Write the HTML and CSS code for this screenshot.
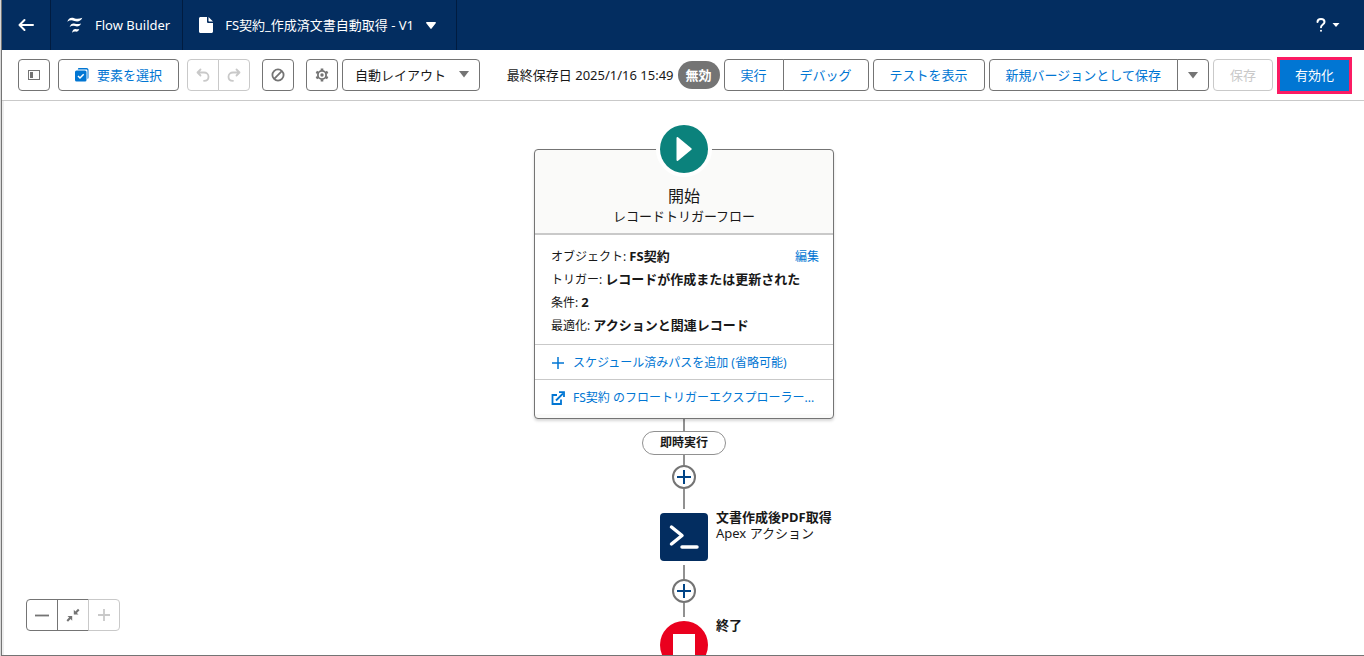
FILE: index.html
```html
<!DOCTYPE html>
<html lang="ja">
<head>
    <meta charset="UTF-8">
    <meta name="viewport" content="width=device-width, initial-scale=1.0">
    <title>FS契約_作成済文書自動取得 - V1 | Flow Builder</title>
    <link rel="stylesheet" href="styles.css">
</head>
<body>
<div class="app">
    <header class="header">
        <button class="header-item back" aria-label="戻る">
            <svg width="16" height="14" viewBox="0 0 16 14" fill="none" stroke="#fff" stroke-width="2" stroke-linecap="round" stroke-linejoin="round"><path d="M6.500 2l-5 5 5 5M1.500 7H15"/></svg>
        </button>
        <div class="header-item brand">
            <svg width="16" height="16" viewBox="0 0 16 16" fill="#fff"><path d="M.3 4.800C1.500 1 4 .2 7.200 1.200c2.600.8 5 .8 8.100-.5-1.500 3.600-4.600 4.300-8 3.200C4.600 3 2.600 3.200.3 4.800z"/><path d="M2.600 10c1.100-3.400 3.200-4 5.400-3.300 1.900.6 3.700.6 6-.3-1.200 3-3.500 3.500-6 2.700-2-.6-3.600-.4-5.400.9z"/><path d="M5 15.700c.7-3.200 2.300-3.900 4.100-3.500 1 .3 2 .2 3.200-.2-.8 2.500-2.200 2.900-3.700 2.600-1.300-.2-2.400 0-3.600 1.100z"/></svg>
            <span>Flow Builder</span>
        </div>
        <button class="header-item flow-name">
            <svg width="14" height="16" viewBox="0 0 14 16" fill="#fff"><path d="M2 0h6v4.500C8 5.500 8.500 6 9.500 6H14v8.500c0 .8-.7 1.500-1.500 1.500h-11C.7 16 0 15.300 0 14.500v-13C0 .7.700 0 1.500 0z"/><path d="M9.500 0L14 4.500h-4c-.3 0-.5-.2-.5-.5z"/></svg>
            <span>FS契約_作成済文書自動取得 - V1</span>
            <svg class="caret" width="10" height="7" viewBox="0 0 10 7" fill="#fff"><path d="M.8 0h8.400c.7 0 1 .7.500 1.200L5.600 6.600c-.3.4-.9.4-1.200 0L.3 1.200C-.2.700.100 0 .8 0z"/></svg>
        </button>
        <button class="help" aria-label="ヘルプ">
            <svg width="10" height="14" viewBox="0 0 10 14" fill="none" stroke="#fff" stroke-width="2" stroke-linecap="round"><path d="M1.500 4C1.500 2 3 1 5 1s3.500 1.200 3.500 3C8.500 6.500 5 6.500 5 9.300"/><path d="M5 12.700v.1"/></svg>
            <svg width="8" height="5" viewBox="0 0 8 5" fill="#fff"><path d="M.5 0h7L4 4z"/></svg>
        </button>
    </header>

    <div class="toolbar">
        <button class="btn icon-btn" aria-label="パネルを表示">
            <svg width="12" height="10" viewBox="0 0 12 10"><rect x=".5" y=".5" width="11" height="9" fill="none" stroke="#747474"/><path d="M2 2h3v6H2z" fill="#747474"/></svg>
        </button>
        <button class="btn select-elements">
            <svg width="14" height="14" viewBox="0 0 14 14" fill="#0176d3"><path d="M4 0h7.500C12.700 0 13.500.8 13.500 2v7.500c0 .8-.3 1.300-1 1.500V2.800c0-.9-.5-1.400-1.400-1.400H2.800C3 .5 3.400 0 4 0z"/><rect y="2.500" width="11.500" height="11" rx="1.500"/><path d="M3 8l2 2 3.700-3.800" fill="none" stroke="#fff" stroke-width="1.500"/></svg>
            要素を選択
        </button>
        <div class="btn-group history">
            <button class="btn icon-btn" disabled aria-label="元に戻す">
                <svg width="14" height="14" viewBox="0 0 14 14" fill="none" stroke="#c9c9c9" stroke-width="1.800" stroke-linecap="round" stroke-linejoin="round"><path d="M4.500 1.500L1.500 4.500l3 3M1.500 4.500H8c2.500 0 4.500 1.700 4.500 4.200C12.500 11 10.800 12.800 8 12.800"/></svg>
            </button>
            <button class="btn icon-btn" disabled aria-label="やり直す">
                <svg width="14" height="14" viewBox="0 0 14 14" fill="none" stroke="#c9c9c9" stroke-width="1.800" stroke-linecap="round" stroke-linejoin="round"><path d="M9.500 1.500l3 3-3 3M12.500 4.500H6C3.500 4.500 1.500 6.200 1.500 8.700 1.500 11 3.200 12.800 6 12.800"/></svg>
            </button>
        </div>
        <button class="btn icon-btn stop" aria-label="無効にする">
            <svg width="14" height="14" viewBox="0 0 14 14" fill="none" stroke="#747474" stroke-width="1.800"><circle cx="7" cy="7" r="5.600"/><path d="M3.200 10.800l7.600-7.600"/></svg>
        </button>
        <button class="btn icon-btn" aria-label="設定">
            <svg width="14" height="14" viewBox="0 0 14 14"><path d="M7 .5v2M7 11.500v2M1.300 3.800l1.700 1M11 9.200l1.700 1M1.300 10.200l1.700-1M11 4.800l1.700-1" stroke="#747474" stroke-width="2.600"/><circle cx="7" cy="7" r="4.100" fill="none" stroke="#747474" stroke-width="1.800"/><circle cx="7" cy="7" r="1.700" fill="#747474"/></svg>
        </button>
        <div class="layout-select">
            <select aria-label="レイアウト">
                <option>自動レイアウト</option>
                <option>自由形式</option>
            </select>
            <svg width="10" height="7" viewBox="0 0 10 7" fill="#747474"><path d="M0 0h10L5 6.500z"/></svg>
        </div>

        <div class="actions">
            <span class="saved">最終保存日 2025/1/16 15:49</span>
            <span class="badge">無効</span>
            <div class="btn-group">
                <button class="btn">実行</button>
                <button class="btn">デバッグ</button>
            </div>
            <button class="btn">テストを表示</button>
            <div class="btn-group">
                <button class="btn">新規バージョンとして保存</button>
                <button class="btn icon-btn" aria-label="その他の保存">
                    <svg width="10" height="7" viewBox="0 0 10 7" fill="#747474"><path d="M0 0h10L5 6.500z"/></svg>
                </button>
            </div>
            <button class="btn" disabled>保存</button>
            <button class="activate">有効化</button>
        </div>
    </div>

    <main class="canvas">
        <section class="start-card">
            <div class="start-icon">
                <svg width="48" height="48" viewBox="0 0 48 48"><circle cx="24" cy="24" r="24" fill="#0b827c"/><path d="M16.500 13c0-.9.800-1.200 1.500-.7l13.300 10.900c.6.500.6 1.100 0 1.600L18 35.700c-.7.500-1.500.2-1.500-.7z" fill="#fff"/></svg>
            </div>
            <div class="start-head">
                <h1>開始</h1>
                <p>レコードトリガーフロー</p>
            </div>
            <div class="start-body">
                <a href="#" class="edit">編集</a>
                <p>オブジェクト: <b>FS契約</b></p>
                <p>トリガー: <b>レコードが作成または更新された</b></p>
                <p>条件: <b>2</b></p>
                <p>最適化: <b>アクションと関連レコード</b></p>
            </div>
            <a href="#" class="start-link">
                <svg width="14" height="14" viewBox="0 0 14 14" stroke="#0176d3" stroke-width="1.500"><path d="M7 1v12M1 7h12"/></svg>
                <span>スケジュール済みパスを追加 (省略可能)</span>
            </a>
            <a href="#" class="start-link">
                <svg width="14" height="14" viewBox="0 0 14 14" fill="none" stroke="#0176d3" stroke-width="1.800"><path d="M6 4H1.500v9H10V8.500"/><path d="M5 9.500l7-7"/><path d="M8 1.200h5V6"/></svg>
                <span>FS契約 のフロートリガーエクスプローラー...</span>
            </a>
        </section>

        <div class="line line-m"></div>
        <div class="pill">即時実行</div>
        <div class="line line-s"></div>
        <button class="add" aria-label="要素を追加">
            <svg width="14" height="14" viewBox="0 0 14 14" stroke="#014486" stroke-width="2"><path d="M7 0v14M0 7h14"/></svg>
        </button>
        <div class="line line-l"></div>

        <div class="node">
            <svg width="48" height="48" viewBox="0 0 48 48"><rect width="48" height="48" rx="4" fill="#032d60"/><path d="M11.500 14l10.500 8.500L11.500 31" fill="none" stroke="#fff" stroke-width="3.500" stroke-linecap="round" stroke-linejoin="round"/><path d="M22 34h15" stroke="#fff" stroke-width="3.500" stroke-linecap="round"/></svg>
            <div class="node-label"><b>文書作成後PDF取得</b><span>Apex アクション</span></div>
        </div>

        <div class="line line-b"></div>
        <button class="add" aria-label="要素を追加">
            <svg width="14" height="14" viewBox="0 0 14 14" stroke="#014486" stroke-width="2"><path d="M7 0v14M0 7h14"/></svg>
        </button>
        <div class="line line-b"></div>

        <div class="node">
            <svg width="48" height="48" viewBox="0 0 48 48"><circle cx="24" cy="24" r="24" fill="#ea001e"/><rect x="13" y="13" width="22" height="22" fill="#fff"/></svg>
            <div class="node-label"><b>終了</b></div>
        </div>

        <div class="btn-group zoom">
            <button class="btn icon-btn" aria-label="縮小">
                <svg width="14" height="14" viewBox="0 0 14 14" stroke="#747474" stroke-width="1.800"><path d="M0 7.500h14"/></svg>
            </button>
            <button class="btn icon-btn" aria-label="全体を表示">
                <svg width="14" height="14" viewBox="0 0 14 14" fill="#747474"><path d="M7.800 1.800v4.700h4.700l-1.600-1.600L13.500 2.300 12 .8 9.400 3.400z"/><path d="M6.200 12.700V8H1.500l1.600 1.600L.5 12.200 2 13.700l2.600-2.600z"/></svg>
            </button>
            <button class="btn icon-btn" disabled aria-label="拡大">
                <svg width="14" height="14" viewBox="0 0 14 14" stroke="#c9c9c9" stroke-width="1.800"><path d="M7 1v12M1 7h12"/></svg>
            </button>
        </div>
    </main>
</div>
</body>
</html>
```
FILE: styles.css
```css
* {
    box-sizing: border-box;
}

body {
    margin: 0;
    padding-left: 1px;
    background: #d8d8d8;
    font-family: "Noto Sans", "Noto Sans CJK JP", sans-serif;
    font-size: 13px;
    line-height: 20px;
    color: #181818;
    overflow: hidden;
}

button, select {
    font: inherit;
    color: inherit;
    cursor: pointer;
}

a {
    color: #0176d3;
    text-decoration: none;
}

h1, p {
    margin: 0;
}

svg {
    display: block;
    flex: none;
}

.app {
    display: flex;
    flex-direction: column;
    height: 100vh;
    border-left: 1px solid #747474;
    border-bottom: 1px solid #747474;
}

/* Header */
.header {
    display: flex;
    flex: none;
    height: 50px;
    background: #032d60;
    color: #fff;
}

.header-item {
    display: flex;
    align-items: center;
    gap: 12px;
    padding: 0 16px;
    border: none;
    border-right: 1px solid #011c40;
    background: none;
}

.brand {
    padding-right: 12px;
}

.flow-name {
    padding-right: 20px;
}

.help {
    display: flex;
    align-items: center;
    gap: 6px;
    margin-left: auto;
    padding: 0 24px;
    border: none;
    background: none;
}

/* Toolbar */
.toolbar {
    display: flex;
    flex: none;
    align-items: center;
    height: 51px;
    padding: 0 12px 0 16px;
    border-bottom: 1px solid #c9c9c9;
    background: #fff;
    white-space: nowrap;
}

.btn {
    display: flex;
    align-items: center;
    justify-content: center;
    height: 32px;
    padding: 0 16px;
    border: 1px solid #747474;
    border-radius: 4px;
    background: #fff;
    color: #0176d3;
}

.btn:disabled {
    border-color: #c9c9c9;
    color: #c9c9c9;
    cursor: default;
}

.icon-btn {
    width: 32px;
    padding: 0;
}

.btn-group {
    display: flex;
}

.btn-group .btn:not(:first-child) {
    margin-left: -1px;
    border-top-left-radius: 0;
    border-bottom-left-radius: 0;
}

.btn-group .btn:not(:last-child) {
    border-top-right-radius: 0;
    border-bottom-right-radius: 0;
}

.select-elements {
    gap: 8px;
    margin: 0 8px;
}

.stop {
    margin: 0 12px;
}

.layout-select {
    position: relative;
    margin-left: 4px;
}

.layout-select select {
    display: block;
    height: 32px;
    padding: 0 32px 0 12px;
    border: 1px solid #747474;
    border-radius: 4px;
    background: #fff;
    appearance: none;
}

.layout-select svg {
    position: absolute;
    top: 12px;
    right: 11px;
    pointer-events: none;
}

.actions {
    display: flex;
    align-items: center;
    gap: 4px;
    margin-left: auto;
}

.badge {
    padding: 4px 8px;
    border-radius: 14px;
    background: #747474;
    color: #fff;
    font-weight: bold;
}

.activate {
    height: 37px;
    padding: 0 15px;
    border: 3px solid #fb1b63;
    background: #0176d3;
    color: #fff;
}

/* Canvas */
.canvas {
    position: relative;
    display: flex;
    flex: 1;
    flex-direction: column;
    align-items: center;
    min-height: 0;
    padding-top: 48px;
    border-left: 2px solid #eee;
    background: #fff;
    overflow: hidden;
}

.canvas > * {
    flex: none;
}

.start-card {
    position: relative;
    width: 300px;
    padding-bottom: 4px;
    border: 1px solid #747474;
    border-radius: 4px;
    background: #fafaf9;
    box-shadow: 0 2px 3px rgba(0, 0, 0, 0.16);
}

.start-icon {
    position: absolute;
    top: -29px;
    left: 50%;
    transform: translateX(-50%);
    border: 4px solid #fff;
    border-radius: 50%;
}

.start-head {
    padding: 36px 0 7px;
    border-bottom: 2px solid #c9c9c9;
    text-align: center;
}

.start-head h1 {
    font-size: 16px;
    font-weight: normal;
    line-height: 20px;
}

.start-body {
    padding: 10px 16px 7px;
    background: #fff;
    font-size: 12px;
    line-height: 23px;
}

.start-body b {
    font-size: 13px;
}

.edit {
    float: right;
    margin-right: -2px;
}

.start-link {
    display: flex;
    align-items: center;
    gap: 8px;
    height: 35px;
    padding: 2px 16px 0;
    border-top: 1px solid #c9c9c9;
    background: #fff;
    font-size: 12px;
    white-space: nowrap;
}

.line {
    width: 2px;
    background: #919191;
}

.line-s {
    height: 10px;
}

.line-m {
    height: 12px;
}

.line-b {
    height: 14px;
}

.line-l {
    height: 20px;
}

.pill {
    padding: 1px 17px;
    border: 1px solid #919191;
    border-radius: 12px;
    font-size: 12px;
    font-weight: bold;
}

.add {
    display: flex;
    align-items: center;
    justify-content: center;
    width: 24px;
    height: 24px;
    padding: 0;
    border: 2px solid #747474;
    border-radius: 50%;
    background: #fff;
}

.node {
    position: relative;
    margin: 4px 0;
}

.node-label {
    position: absolute;
    top: -4px;
    left: 56px;
    line-height: 16px;
    white-space: nowrap;
}

.node-label b, .node-label span {
    display: block;
}

.zoom {
    position: absolute;
    bottom: 24px;
    left: 22px;
}
```
